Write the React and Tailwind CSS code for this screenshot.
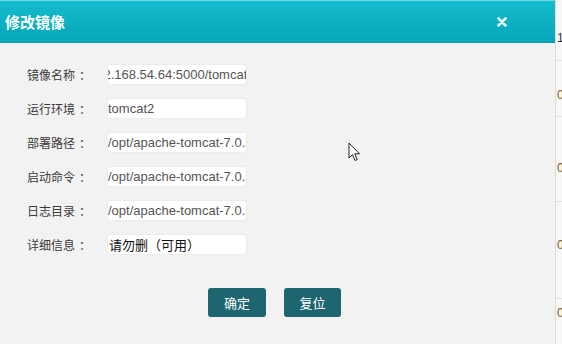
export default function App() {
  const rows = [
    { label: "镜像名称", value: "192.168.54.64:5000/tomcat2", shift: true },
    { label: "运行环境", value: "tomcat2" },
    { label: "部署路径", value: "/opt/apache-tomcat-7.0.52" },
    { label: "启动命令", value: "/opt/apache-tomcat-7.0.52" },
    { label: "日志目录", value: "/opt/apache-tomcat-7.0.52" },
    { label: "详细信息", value: "请勿删（可用）", cjk: true },
  ];
  return (
    <div className="w-[562px] h-[344px] flex overflow-hidden relative bg-[#f2f2f2]">
      <div className="w-[555px] h-full flex flex-col bg-[#f2f2f2]">
        <div className="h-[43px] shrink-0 flex items-center justify-between bg-gradient-to-b from-[#14bccd] to-[#05a6b9] border-t border-[#6fd6e2] border-b border-b-[#0a98aa]">
          <span className="pl-[5px] text-white font-bold text-[15px] [font-family:'Noto_Sans_CJK_SC',sans-serif] leading-none">修改镜像</span>
          <svg width="10" height="10" viewBox="0 0 10 10" className="mr-[48px]">
            <path d="M1.5 1.5 L8.5 8.5 M8.5 1.5 L1.5 8.5" stroke="#e4f7fa" strokeWidth="2.6" strokeLinecap="round" />
          </svg>
        </div>
        <div className="flex flex-col gap-[13px] pt-[21px]">
          {rows.map((r) => (
            <div key={r.label} className="flex items-center h-[21px]">
              <div className="w-[80px] ml-[27px] flex text-[12px] text-[#3a3a3a] [font-family:'Noto_Sans_CJK_SC',sans-serif] leading-none">
                <span>{r.label}</span>
                <span className="pl-[4px]">：</span>
              </div>
              <div className="w-[140px] h-[21px] rounded-[3px] bg-white border border-[#ececec] overflow-hidden flex items-center">
                <span
                  className={
                    r.cjk
                      ? "pl-[1px] whitespace-nowrap text-[13px] text-[#111] [font-family:'Noto_Sans_CJK_SC',sans-serif] leading-none"
                      : r.shift
                      ? "ml-[-19px] whitespace-nowrap text-[13px] text-[#555] [font-family:'Liberation_Sans',sans-serif] leading-none"
                      : "whitespace-nowrap text-[13px] text-[#555] [font-family:'Liberation_Sans',sans-serif] leading-none"
                  }
                >
                  {r.value}
                </span>
              </div>
            </div>
          ))}
        </div>
        <div className="flex gap-[18px] pl-[208px] pt-[33px]">
          <button className="w-[58px] h-[29px] rounded-[3px] bg-[#1d6670] text-white text-[13px] [font-family:'Noto_Sans_CJK_SC',sans-serif]">确定</button>
          <button className="w-[57px] h-[29px] rounded-[3px] bg-[#1d6670] text-white text-[13px] [font-family:'Noto_Sans_CJK_SC',sans-serif]">复位</button>
        </div>
      </div>
      <div className="w-[7px] h-full bg-[#f7f7f7] border-l border-[#dcdcdc] flex flex-col text-[12px] [font-family:'Liberation_Sans',sans-serif] text-[#333] overflow-hidden leading-none">
        <div className="h-[61px] border-b border-[#e2e2e2] pt-[32px] pl-[1px]">1</div>
        <div className="h-[56px] border-b border-[#e2e2e2] pt-[28px] pl-[1px] text-[#7a5a18]">0</div>
        <div className="h-[85px] border-b border-[#e2e2e2] pt-[45px] pl-[1px] text-[#7a5a18]">0</div>
        <div className="h-[97px] border-b border-[#e2e2e2] pt-[37px] pl-[1px] text-[#7a5a18]">0</div>
        <div className="flex-1 pt-[8px] pl-[1px] text-[#7a5a18]">0</div>
      </div>
      <svg className="absolute left-[348px] top-[142px]" width="14" height="21" viewBox="0 0 14 21">
        <path d="M1 1 L1 16 L4.5 12.5 L7 18.5 L9.2 17.5 L6.8 11.8 L11.5 11.8 Z" fill="white" stroke="#222" strokeWidth="1" strokeLinejoin="round" />
      </svg>
    </div>
  );
}
